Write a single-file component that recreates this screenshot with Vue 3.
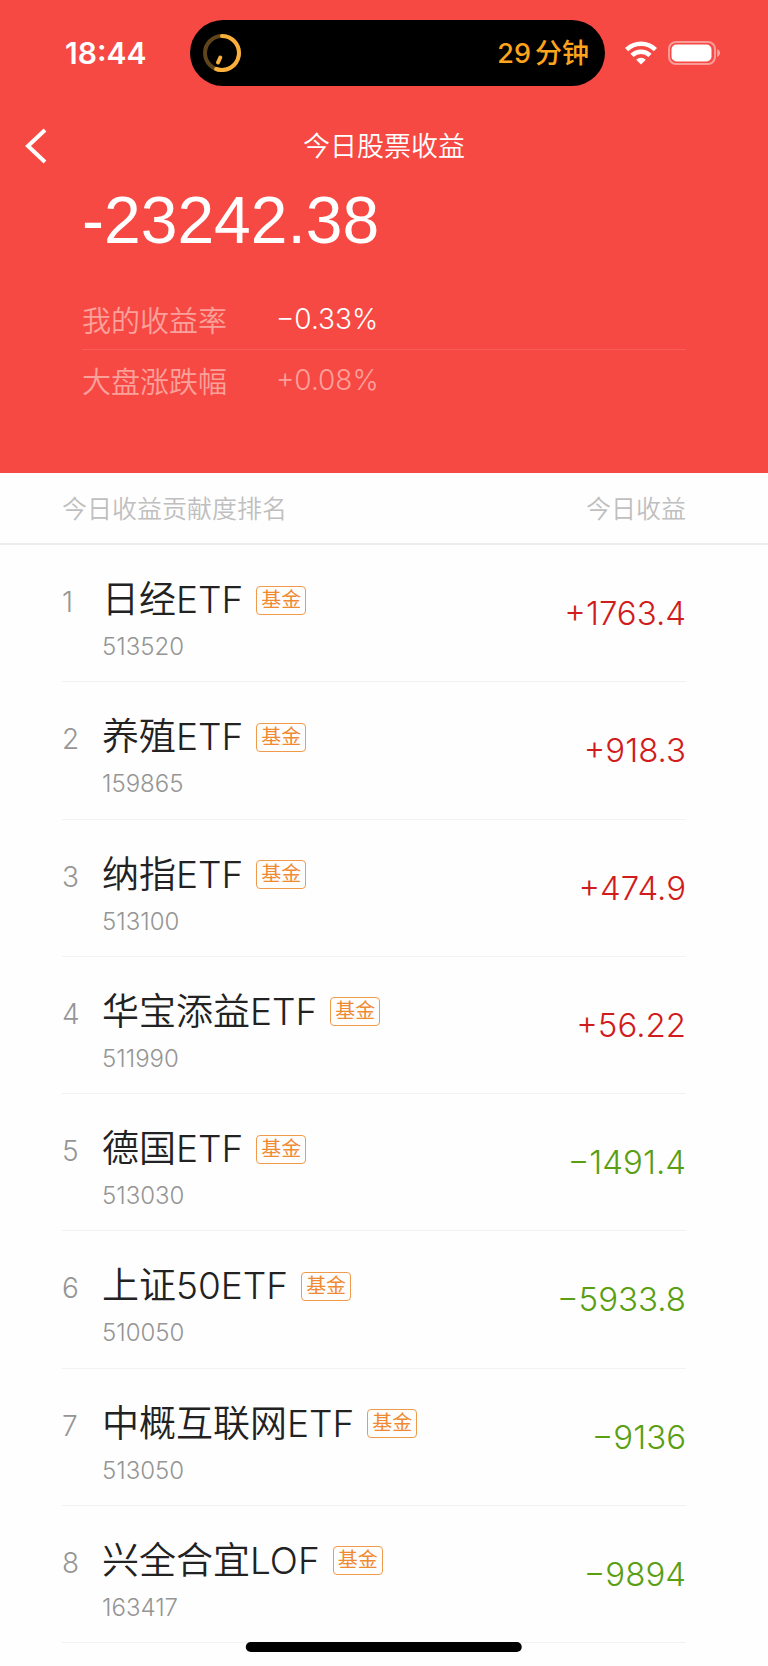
<script setup>
const summary = [
  { label: '我的收益率', value: '−0.33%', muted: false },
  { label: '大盘涨跌幅', value: '+0.08%', muted: true },
]

const funds = [
  { name: '日经ETF', code: '513520', profit: '+1763.4' },
  { name: '养殖ETF', code: '159865', profit: '+918.3' },
  { name: '纳指ETF', code: '513100', profit: '+474.9' },
  { name: '华宝添益ETF', code: '511990', profit: '+56.22' },
  { name: '德国ETF', code: '513030', profit: '−1491.4' },
  { name: '上证50ETF', code: '510050', profit: '−5933.8' },
  { name: '中概互联网ETF', code: '513050', profit: '−9136' },
  { name: '兴全合宜LOF', code: '163417', profit: '−9894' },
]
</script>

<template>
  <div class="page">
    <header class="hero">
      <div class="status">
        <time class="clock">18:44</time>
        <div class="island">
          <svg class="timer" viewBox="0 0 38 38" aria-hidden="true">
            <circle cx="19" cy="19" r="17" fill="none" stroke="#5f441c" stroke-width="4" />
            <path d="M19 2A17 17 0 1 1 13.2 35" fill="none" stroke="#fbb03b" stroke-width="4" stroke-linecap="round" />
            <path d="M17.3 23.5L15 28.5" stroke="#fbb03b" stroke-width="4" stroke-linecap="round" />
          </svg>
          <span class="remaining"><span>29</span><span>分钟</span></span>
        </div>
        <div class="indicators">
          <svg class="wifi" viewBox="0 0 32 24" aria-hidden="true">
            <g fill="none" stroke="#fff" stroke-width="4.6">
              <path d="M1.6 8.6A20.5 20.5 0 0 1 30.4 8.6" />
              <path d="M7 14.4A12.8 12.8 0 0 1 25 14.4" />
            </g>
            <path d="M16 23.6L11.2 18.8A6.8 6.8 0 0 1 20.8 18.8Z" fill="#fff" />
          </svg>
          <svg class="battery" viewBox="0 0 52 24" aria-hidden="true">
            <rect x="1" y="1" width="46" height="22" rx="7" fill="none" stroke="#fff" stroke-opacity=".45" stroke-width="2" />
            <rect x="3.5" y="3.5" width="40" height="17" rx="5" fill="#fff" />
            <path d="M49.2 8C51 8.8 52 10.3 52 12S51 15.2 49.2 16Z" fill="#fff" fill-opacity=".5" />
          </svg>
        </div>
      </div>

      <nav class="navbar">
        <button class="back" type="button" aria-label="返回">
          <svg viewBox="0 0 22 36" aria-hidden="true">
            <path d="M20 2L3 18L20 34" fill="none" stroke="#fff" stroke-width="4" stroke-linejoin="miter" />
          </svg>
        </button>
        <h1>今日股票收益</h1>
      </nav>

      <div class="overview">
        <p class="total">-23242.38</p>
        <dl>
          <div v-for="item in summary" :key="item.label" class="stat">
            <dt>{{ item.label }}</dt>
            <dd :class="{ muted: item.muted }">{{ item.value }}</dd>
          </div>
        </dl>
      </div>
    </header>

    <main>
      <table>
        <thead>
          <tr>
            <th scope="col">今日收益贡献度排名</th>
            <th scope="col">今日收益</th>
          </tr>
        </thead>
        <tbody>
          <tr v-for="(fund, i) in funds" :key="fund.code">
            <td class="rank">{{ i + 1 }}</td>
            <td class="fund">
              <div class="name">{{ fund.name }}<span class="badge">基金</span></div>
              <div class="code">{{ fund.code }}</div>
            </td>
            <td class="profit" :class="fund.profit.startsWith('+') ? 'gain' : 'loss'">{{ fund.profit }}</td>
          </tr>
        </tbody>
      </table>
    </main>
    <div class="home-bar"></div>
  </div>
</template>

<style>
body {
  background: #fefefe;
}
</style>

<style scoped>
.page {
  display: flex;
  flex-direction: column;
  box-sizing: border-box;
  min-height: 100vh;
  padding-bottom: 23px;
  background: #fefefe;
  font-family: Inter, "Noto Sans CJK SC", sans-serif;
  font-weight: 350;
}

.hero {
  padding: 20px 0 63px;
  background: #f74944;
  color: #fff;
}

.status {
  display: grid;
  grid-template-columns: 190fr 415fr 163fr;
  align-items: center;
}

.clock {
  padding-left: 65px;
  font-size: 30px;
  line-height: 36px;
  font-weight: 600;
}

.island {
  display: flex;
  align-items: center;
  justify-content: space-between;
  height: 66px;
  box-sizing: border-box;
  padding: 0 16px 0 13px;
  border-radius: 33px;
  background: #000;
}

.timer {
  width: 38px;
  height: 38px;
}

.remaining {
  display: flex;
  align-items: center;
  gap: 4px;
  padding-top: 2px;
  color: #fda31c;
  font-size: 27px;
  line-height: 36px;
  font-weight: 450;
}

.indicators {
  display: flex;
  align-items: center;
  gap: 11px;
  padding-left: 20px;
}

.wifi {
  width: 32px;
  height: 24px;
}

.battery {
  width: 52px;
  height: 24px;
}

.navbar {
  display: grid;
  grid-template-columns: 80px 1fr 80px;
  align-items: center;
  height: 50px;
  margin-top: 35px;
}

.back {
  height: 50px;
  padding: 0 0 0 25px;
  border: 0;
  background: none;
  text-align: left;
}

.back svg {
  display: block;
  width: 22px;
  height: 36px;
}

h1 {
  margin: 0;
  padding-top: 2px;
  text-align: center;
  font-size: 27px;
  line-height: 40px;
  font-weight: 350;
}

.overview {
  padding: 13px 82px 0;
}

.total {
  margin: 0 0 33px;
  font-family: "Liberation Sans", Arial, sans-serif;
  font-size: 66px;
  line-height: 72px;
  font-weight: 400;
}

dl {
  margin: 0;
}

.stat {
  display: grid;
  grid-template-columns: 194px 1fr;
  align-items: center;
  height: 60px;
  font-size: 28px;
}

.stat + .stat {
  border-top: 1px solid #f95c57;
}

dt,
.muted {
  color: #fba19b;
}

dt {
  font-size: 29px;
}

dd {
  margin: 0;
}

main {
  display: flex;
  flex: 1;
}

table {
  display: flex;
  flex: 1;
  flex-direction: column;
}

thead tr {
  display: flex;
  align-items: center;
  justify-content: space-between;
  height: 70px;
  padding: 0 82px 0 62px;
  border-bottom: 2px solid #ececec;
}

thead {
  display: block;
}

th {
  padding: 2px 0 0;
  color: #bfbfbf;
  font-size: 25px;
  line-height: 36px;
  font-weight: 350;
}

tbody {
  display: grid;
  flex: 1;
  grid-auto-rows: 1fr;
}

tbody tr {
  display: grid;
  grid-template-columns: 40px 1fr auto;
  margin: 0 82px 0 62px;
  border-bottom: 1px solid #f2f2f2;
}

td {
  padding: 0;
}

.rank {
  padding-top: 34px;
  color: #959595;
  font-size: 28px;
  line-height: 46px;
}

.fund {
  padding-top: 32px;
}

.name {
  display: flex;
  align-items: center;
  gap: 13px;
  color: #222;
  font-size: 37px;
  line-height: 46px;
}

.badge {
  padding: 0 4px;
  border: 1px solid #f09a4c;
  border-radius: 4px;
  color: #f08a32;
  font-size: 20px;
  line-height: 27px;
  font-weight: 400;
}

.code {
  color: #959595;
  font-size: 24px;
  line-height: 48px;
}

.profit {
  align-self: center;
  font-size: 33px;
  line-height: 46px;
}

.gain {
  color: #d01c1c;
}

.loss {
  color: #5a9e12;
}

.home-bar {
  position: fixed;
  bottom: 14px;
  left: 50%;
  width: 36%;
  height: 10px;
  border-radius: 5px;
  background: #000;
  transform: translateX(-50%);
}
</style>
